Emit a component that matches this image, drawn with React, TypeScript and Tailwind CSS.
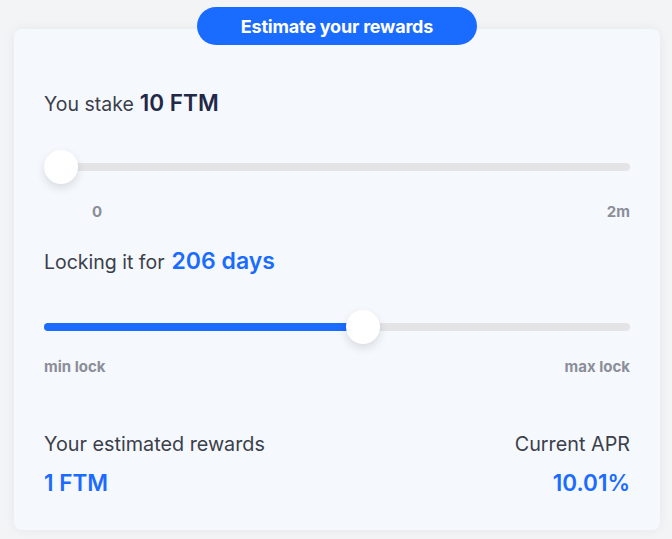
const font = { fontFamily: 'Inter, "Noto Sans", sans-serif' };

function Slider({ percent, fill }: { percent: number; fill: boolean }) {
  return (
    <div className="relative h-[34px] flex items-center">
      <div className="w-full h-[8px] rounded-full bg-[#e4e4e6]">
        {fill && <div className="h-full rounded-full bg-[#1a6bff]" style={{ width: `${percent}%` }} />}
      </div>
      <div
        className="absolute top-0 w-[34px] h-[34px] -ml-[17px] rounded-full bg-white shadow-[0_4px_10px_rgba(0,0,0,0.12)]"
        style={{ left: `${percent}%` }}
      />
    </div>
  );
}

export default function App() {
  return (
    <div className="w-full h-[539px] bg-[#f3f4f6] pl-[14px] pr-[12px] pt-[29px] pb-[9px]" style={font}>
      <div className="relative h-full rounded-lg bg-[#f5f8fc] shadow-[0_0_12px_rgba(0,0,0,0.06)] px-[30px] pt-[57px]">
        <div className="absolute left-1/2 -translate-x-1/2 -top-[22px] w-[280px] h-[38px] rounded-full bg-[#1a6bff] flex items-center justify-center text-white text-[18px] font-bold tracking-[-0.2px]">
          Estimate your rewards
        </div>

        <div className="h-[28px] flex items-baseline text-[19.5px] text-[#3b3f4a]">
          You stake
          <span className="ml-[6px] text-[22.5px] font-semibold text-[#222845]">10 FTM</span>
        </div>

        <div className="mt-[36px]">
          <Slider percent={2.9} fill={false} />
        </div>
        <div className="mt-[17px] h-[20px] flex justify-between text-[15px] font-bold text-[#8b8e99]">
          <span className="ml-[48px]">0</span>
          <span>2m</span>
        </div>

        <div className="mt-[23px] h-[28px] flex items-baseline text-[19.5px] text-[#3b3f4a]">
          Locking it for
          <span className="ml-[7px] text-[23px] font-semibold text-[#1a6bff]">206 days</span>
        </div>

        <div className="mt-[38px]">
          <Slider percent={54.4} fill />
        </div>
        <div className="mt-[12px] h-[20px] flex justify-between text-[15px] font-bold text-[#8b8e99]">
          <span>min lock</span>
          <span>max lock</span>
        </div>

        <div className="mt-[54px] flex justify-between">
          <div className="flex flex-col">
            <span className="h-[26px] text-[19.8px] text-[#3b3f4a]">Your estimated rewards</span>
            <span className="mt-[10px] h-[28px] text-[22.5px] font-semibold text-[#1a6bff]">1 FTM</span>
          </div>
          <div className="flex flex-col items-end">
            <span className="h-[26px] text-[19.8px] text-[#3b3f4a]">Current APR</span>
            <span className="mt-[10px] h-[28px] text-[22.5px] font-semibold text-[#1a6bff]">10.01%</span>
          </div>
        </div>
      </div>
    </div>
  );
}
